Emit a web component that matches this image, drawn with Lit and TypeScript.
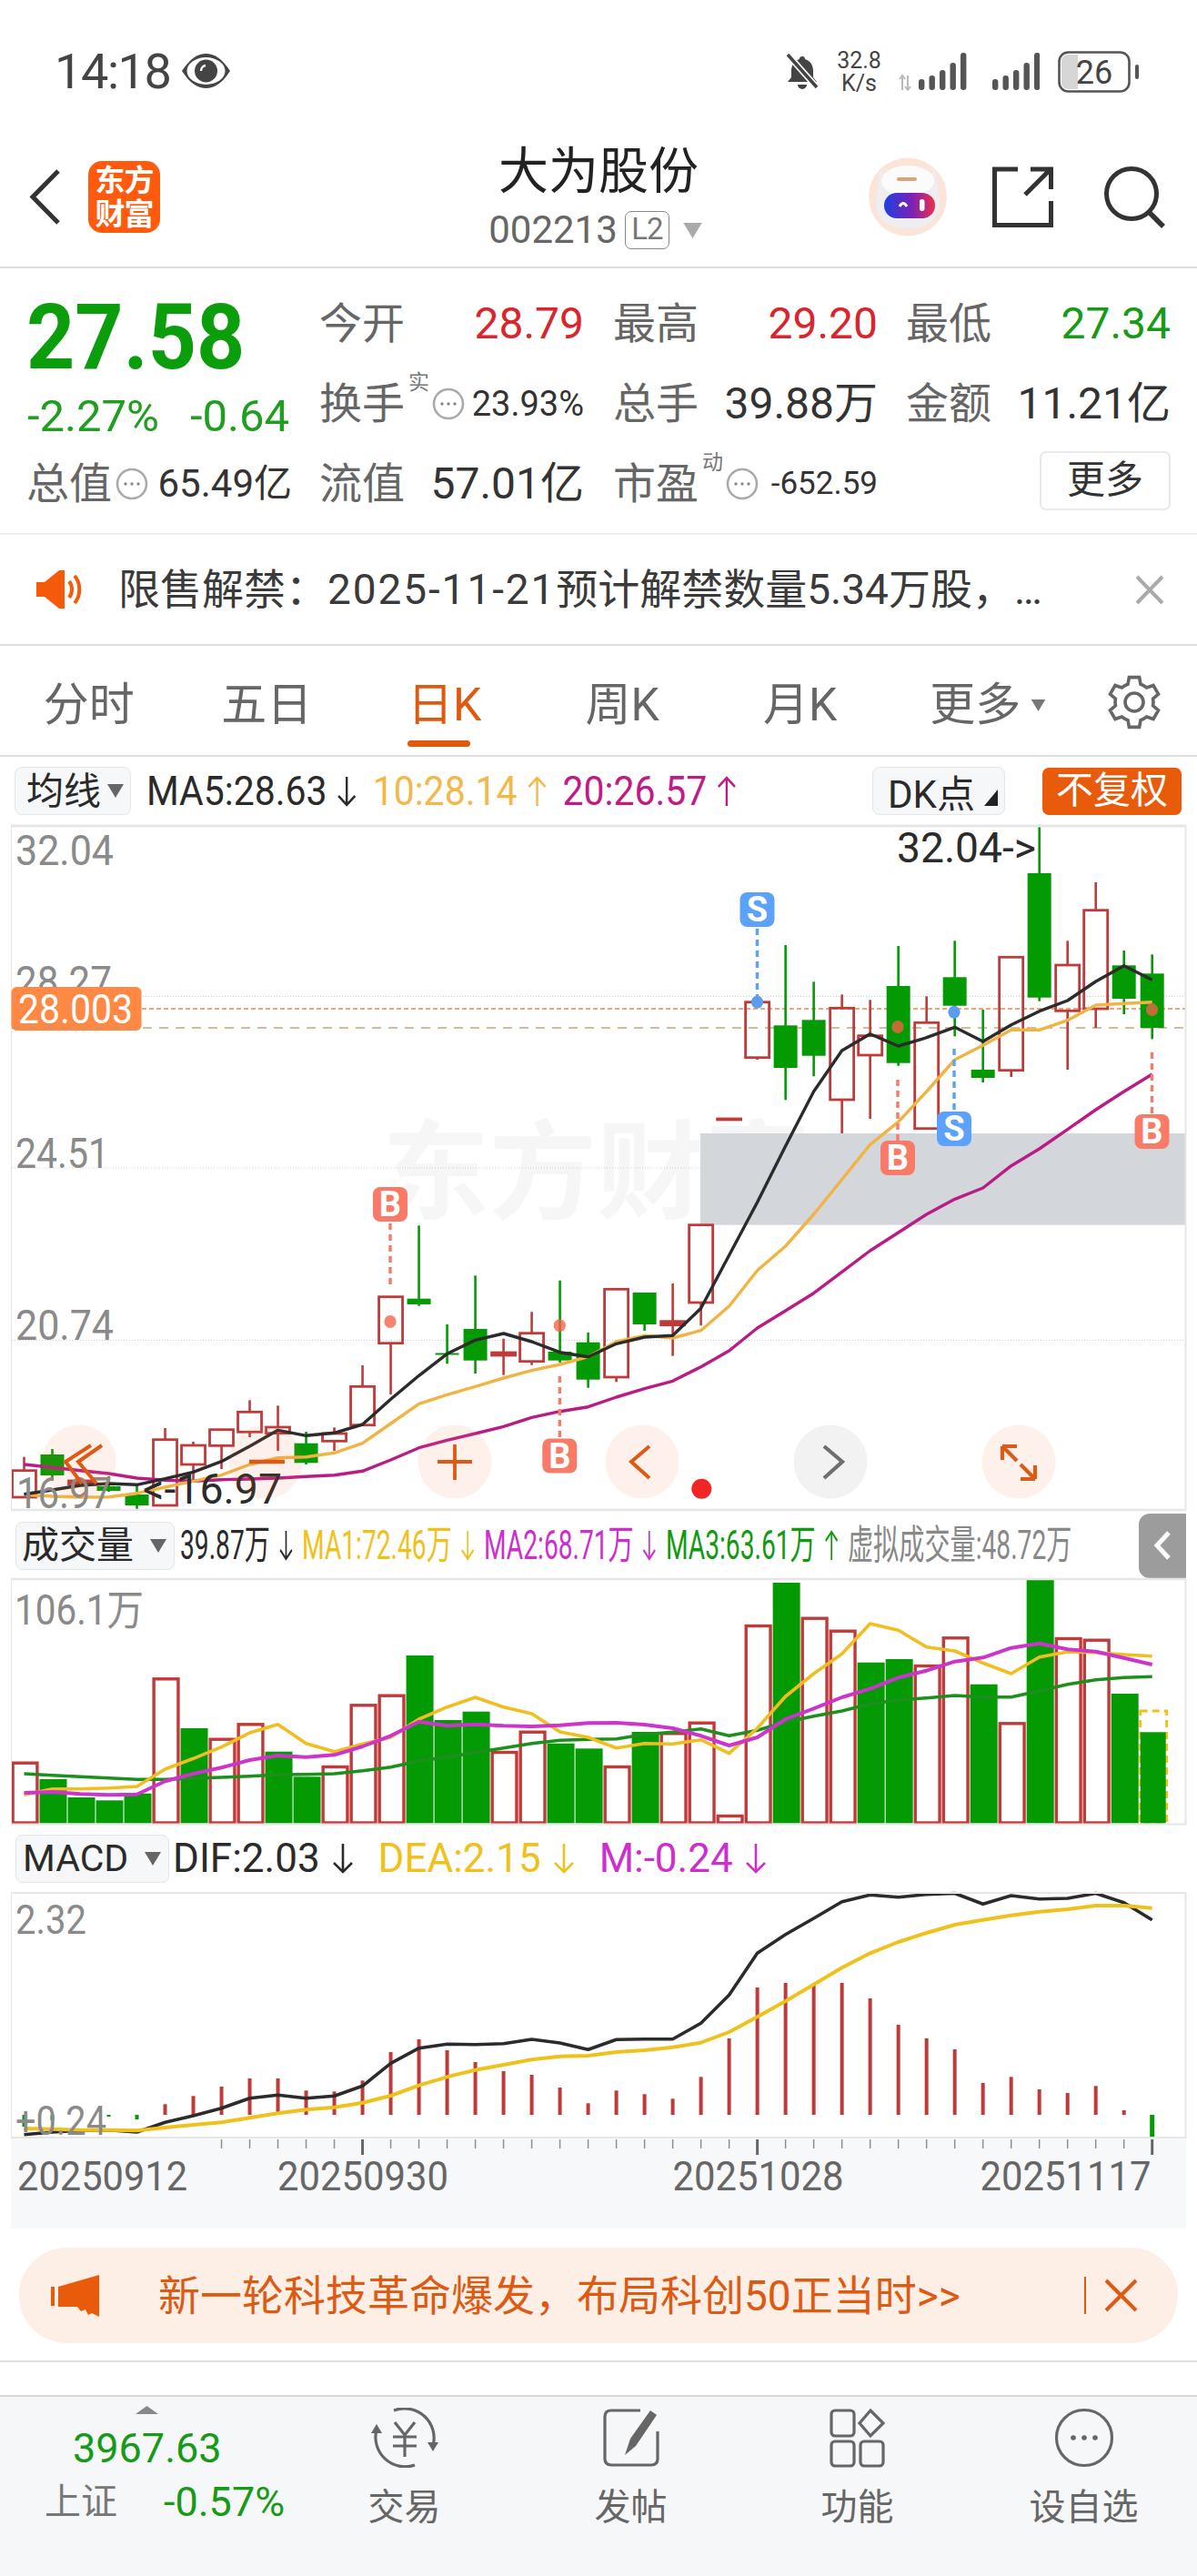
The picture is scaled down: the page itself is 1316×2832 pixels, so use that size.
import { LitElement, html, svg, css } from "lit";
import { customElement } from "lit/decorators.js";

const N = 41;
const X = (i: number) => 26.5 + 31.005 * i;

// type (r/g), wick top, body top, body bottom, wick bottom
type C = [string, number, number, number, number];
const candles: C[] = [
  ["r",1601.7,1616.7,1646,1646],["g",1593,1599,1622,1628],["r",1626,1628,1632,1634],["g",1623,1634,1639,1640],["g",1633,1643,1655,1660],
  ["r",1570,1582.7,1655,1655],["r",1585,1589,1610,1627],["r",1571,1571.7,1589.3,1615],["r",1539.3,1552.3,1574.3,1580],["r",1545.3,1569,1575.7,1595],
  ["g",1574,1586.7,1608.3,1610],["r",1569.3,1576,1584.3,1595],["r",1501,1524.3,1566.7,1566.7],["r",1425.7,1425.7,1476.7,1533],["g",1347.3,1427.7,1434,1435.7],
  ["g",1456,1487.5,1489.5,1499.3],["g",1402.3,1461,1495.7,1510],["r",1471.7,1487,1490,1511.7],["r",1442.3,1465.7,1496.7,1500.7],["g",1407.7,1486,1495.7,1498],
  ["g",1465,1475.7,1516.7,1525.7],["r",1417.3,1417.3,1514,1519.3],["g",1421,1421,1456,1463],["r",1411,1452.7,1456.7,1490.7],["r",1346.7,1346.7,1432,1457.3],
  ["r",1230,1230,1231,1231],["r",1101.7,1101.7,1162.7,1165],["g",1039,1127.3,1174,1209.3],["g",1079.3,1121.3,1160.7,1183.3],["r",1093.3,1108.3,1209,1246],
  ["r",1099.3,1138.7,1160,1230],["g",1040,1084,1168.7,1171.7],["r",1095.3,1124.3,1240.7,1240.7],["g",1034.3,1074.3,1105.7,1139.3],["g",1110,1176,1185,1190],
  ["r",1052.3,1052.3,1176.7,1184],["g",906.7,960,1096.7,1100.7],["r",1034.3,1061,1111.3,1176],["r",970,1000.7,1109,1130],["g",1045,1061.3,1098,1115],
  ["g",1049.3,1070.3,1130,1142.3],
];
const ma5 = [1642.7,1638,1633,1631,1632.3,1625.7,1618.3,1606.7,1590,1572.3,1578.3,1575.3,1566,1538.3,1512.3,1488.3,1473.3,1466,1475,1486.7,1491.7,1477.3,1470,1468.3,1438.3,1380,1321.7,1260,1200,1155,1136.7,1150,1140.7,1129.3,1145,1126.7,1111.7,1100,1079,1061.7,1077.3];
const ma10 = [1643.3,1645,1646,1645.7,1641.7,1635,1628.3,1621.7,1610,1602.7,1601.7,1597.3,1586.7,1565,1543.3,1533.3,1524.3,1515,1506.7,1500,1491.7,1475,1468.3,1471,1462.7,1436,1396.7,1370,1335,1296.7,1258.3,1233.3,1200,1165,1149.3,1132.3,1132.3,1121.7,1105,1103.3,1101.7];
const ma20 = [1610,1613.3,1616.7,1620,1625,1627.3,1628.3,1626.7,1626,1625,1623.3,1621.7,1617.3,1605,1591.7,1583.3,1576,1568.3,1558.3,1551.7,1546.7,1536,1526.7,1518.3,1502.7,1485,1460,1441,1421.7,1398.3,1375,1355,1335,1318.3,1306,1281.7,1263,1241.7,1220,1200,1181];

const vols: [string, number][] = [
  ["r",1936.7],["g",1956],["g",1976],["g",1979.3],["g",1971.7],["r",1844.3],["g",1900],["r",1910.7],["r",1894.3],["g",1925.7],
  ["g",1953.3],["r",1941],["r",1873.3],["r",1862.7],["g",1820],["g",1891],["g",1881.7],["r",1925],["r",1902.7],["g",1916.7],
  ["g",1922.3],["r",1941],["g",1904],["r",1904.3],["r",1892.7],["r",1995],["r",1786],["g",1740],["r",1777.7],["r",1791.7],
  ["g",1827.7],["g",1824],["r",1830],["r",1799.3],["g",1851.7],["r",1893.3],["g",1735.7],["r",1800],["r",1801.7],["g",1862],["g",1904.3],
];
const vma1 = [1973.3,1966.7,1966.7,1965.7,1964,1945,1933.3,1920.7,1905,1895.7,1916.7,1925.7,1917.3,1910,1890,1876.7,1866,1876.7,1884,1904,1910,1921.7,1916.7,1917.3,1912.7,1927.7,1900,1865,1840,1818.3,1785,1792.3,1810.7,1815,1828.3,1840,1821.7,1816,1816.7,1819,1820.7];
const vma2 = [1971,1970,1972.3,1973.3,1972.7,1958.3,1950,1943.3,1935,1930,1931.7,1929.3,1920,1908.3,1892.7,1897.3,1895.7,1897.3,1898,1896.7,1894.3,1894,1896,1900,1908.3,1919,1910,1890,1878.3,1866,1856.7,1844.3,1836.7,1826.7,1822.3,1811.7,1806.7,1813.3,1815.7,1822.7,1830];
const vma3 = [1950,1951.7,1953.3,1954.7,1956.3,1956.3,1955,1954,1952.7,1951,1950.7,1950,1946.7,1942.7,1936,1931.7,1926.7,1921.7,1916.7,1913.3,1912.3,1911.7,1906.7,1904.3,1900.7,1908.3,1902.3,1893.3,1886.7,1881,1873.3,1869,1866.7,1864,1865.7,1865.7,1859,1851.7,1846.7,1844.3,1843.3];

const macd = [2338,2331,2325,2327,2330,2313.3,2304.3,2294,2285,2285,2298.3,2299.3,2287.3,2256,2242,2254,2267,2277,2281,2295,2312.3,2298.3,2302.3,2307.3,2283.3,2241,2185,2180,2182.3,2180,2197,2226,2241,2253,2290,2283.3,2297,2301,2293.3,2320,2350.7];
const dif = [2346.7,2344,2342.3,2341.7,2344,2333.3,2326,2317.7,2306.7,2303.3,2306.7,2304.3,2293.3,2268.3,2251.7,2247.3,2247.7,2246.7,2242,2246,2253.3,2242.3,2241.7,2241.7,2224.3,2193.3,2147.3,2126.7,2109,2090.7,2083.3,2085.7,2082.7,2081.5,2093.3,2084,2087.7,2087,2081.5,2091.7,2110.7];
const dea = [2340,2340.7,2341.7,2341.7,2342.3,2339,2336,2333.3,2328.3,2323.3,2319.3,2316.7,2311.7,2304,2292.7,2283.3,2275.7,2270,2264.3,2260.7,2260,2256,2254,2250.7,2245.7,2234,2217.3,2200,2181.7,2163.3,2147.3,2135,2125,2116,2110.7,2105.7,2101.7,2099,2095,2095,2097.7];

const RED = "#c03a3a";
const GREEN = "#049a04";
const pts = (a: number[], dx = 0) => a.map((y, i) => `${(X(i) + dx).toFixed(1)},${y}`).join(" ");
const line = (a: number[], c: string, w = 3.4) =>
  svg`<polyline points=${pts(a)} fill="none" stroke=${c} stroke-width=${w} stroke-linejoin="round"></polyline>`;
const txt = (x: number, y: number, s: string, len: number, size: number, fill: string, weight = 400) =>
  svg`<text x=${x} y=${y} font-size=${size} fill=${fill} font-weight=${weight} textLength=${len} lengthAdjust="spacingAndGlyphs">${s}</text>`;

function candle(c: C, i: number) {
  const x = X(i);
  const [t, wt, bt, bb, wb] = c;
  const col = t === "r" ? RED : GREEN;
  const wick = svg`<line x1=${x} x2=${x} y1=${wt} y2=${wb} stroke=${col} stroke-width="2.6"></line>`;
  if (t === "g") {
    return svg`${wick}<rect x=${x - 13} y=${bt} width="26" height=${Math.max(bb - bt, 1.5)} fill=${col}></rect>`;
  }
  return svg`<line x1=${x} x2=${x} y1=${wt} y2=${bt} stroke=${col} stroke-width="2.6"></line>
    <line x1=${x} x2=${x} y1=${bb} y2=${wb} stroke=${col} stroke-width="2.6"></line>
    <rect x=${x - 13} y=${bt} width="26" height=${Math.max(bb - bt, 0.6)} fill=${bb - bt > 6 ? "#fff" : RED} fill-opacity=${bb - bt > 6 ? 0 : 1} stroke=${col} stroke-width="2.8"></rect>`;
}

function marker(kind: "B" | "S", x: number, top: number, dashA: number, dashB: number, dotY: number) {
  const col = kind === "B" ? "#f97a66" : "#5ca1fa";
  const dot = kind === "B" ? "rgba(246,98,70,.78)" : "#5b9cf0";
  return svg`
    <line x1=${x} x2=${x} y1=${dashA} y2=${dashB} stroke=${col} stroke-width="3.4" stroke-dasharray="7 5"></line>
    <ellipse cx=${x} cy=${dotY} rx="6.6" ry="7" fill=${dot}></ellipse>
    <rect x=${x - 19} y=${top} width="38" height="38" rx="8" fill=${col}></rect>
    <text x=${x} y=${top + 32} text-anchor="middle" font-size="38" font-weight="700" fill="#fff">${kind}</text>`;
}

function floatBtn(cx: number, grey: boolean, inner: unknown) {
  return svg`<ellipse cx=${cx} cy="1607" rx="40.5" ry="40.5" fill=${grey ? "rgba(225,225,225,.42)" : "rgba(248,120,60,.1)"}></ellipse>
    <g fill="none" stroke=${grey ? "#6e6e6e" : "#dc5a14"} stroke-width="3.6">${inner}</g>`;
}

function mainChart() {
  return svg`<svg class="chart" width="1316" height="754" viewBox="0 907 1316 754">
    <text x="420" y="1331" font-size="118" font-weight="700" fill="#f6f6f6">东方财富</text>
    <g stroke="#cfcfcf" stroke-width="1" stroke-dasharray="1 2">
      <line x1="13" x2="1303" y1="1095.5" y2="1095.5"></line>
      <line x1="13" x2="1303" y1="1284" y2="1284"></line>
      <line x1="13" x2="1303" y1="1473.5" y2="1473.5"></line>
    </g>
    <rect x="770" y="1246" width="533" height="100.7" fill="#d3d6db"></rect>
    <line x1="156" x2="1303" y1="1109" y2="1109" stroke="#e08a55" stroke-width="1.6" stroke-dasharray="5 3"></line>
    <line x1="13" x2="1303" y1="1130" y2="1130" stroke="#c9a67a" stroke-width="1.6" stroke-dasharray="10 8"></line>
    ${candles.map(candle)}
    ${line(ma20, "#b91c84")}${line(ma10, "#f0b445")}${line(ma5, "#2b2b2b")}
    <g fill="none" stroke="#e6e6e6"><line x1="12.5" x2="12.5" y1="907" y2="1661"></line><line x1="1303.5" x2="1303.5" y1="907" y2="1661" stroke-width="2"></line>
      <line x1="12" x2="1304" y1="908" y2="908" stroke-width="3"></line><line x1="12" x2="1304" y1="1660" y2="1660" stroke-width="2.5"></line></g>
    ${txt(17, 951, "32.04", 108, 46, "#8a8a8a")}
    ${txt(17, 1095, "28.27", 106, 46, "#8a8a8a")}
    ${txt(17, 1284, "24.51", 103, 46, "#8a8a8a")}
    ${txt(17, 1473, "20.74", 108, 46, "#8a8a8a")}
    <rect x="12.5" y="1085" width="143" height="48" rx="6" fill="#ff8844"></rect>
    <line x1="13" x2="155" y1="1130" y2="1130" stroke="#c9935f" stroke-width="1.4" stroke-dasharray="10 8"></line>
    ${txt(20, 1125, "28.003", 126, 45, "#fff")}
    ${txt(986, 948, "32.04->", 153, 46, "#2b2b2b")}
    ${txt(18, 1658, "16.97", 105, 48, "#8a8a8a")}
    ${txt(157, 1652.5, "<-16.97", 153, 46, "#2b2b2b")}
    ${marker("S", 832.5, 981, 1021, 1097, 1101.7)}
    ${marker("B", 987, 1254, 1187, 1254, 1129)}
    ${marker("S", 1049, 1222, 1153, 1221, 1112.7)}
    ${marker("B", 1266.5, 1225, 1157, 1224, 1110)}
    ${marker("B", 429, 1305, 1345, 1412, 1453)}
    ${marker("B", 615.3, 1581.5, 1513, 1581, 1457.3)}
    ${floatBtn(87, false, svg`<path d="M100 1589 L72 1607 L90 1631 M112 1589 L86 1607 L106 1631" stroke-width="4"></path>`)}
    ${floatBtn(292, false, svg`<path d="M274 1607 H313" stroke-width="4.5"></path>`)}
    ${floatBtn(500, false, svg`<path d="M481 1607 H519 M500 1588 V1627" stroke-width="3.8"></path>`)}
    ${floatBtn(706, false, svg`<path d="M714 1590 L694 1607 L714 1625" stroke-width="4"></path>`)}
    ${floatBtn(913, true, svg`<path d="M906 1590 L926 1607 L906 1625" stroke-width="4.2"></path>`)}
    ${floatBtn(1120, false, svg`<path d="M1102 1590 H1118 M1102 1590 V1605 M1102 1590 L1118 1606 M1138 1626 H1122 M1138 1626 V1611 M1138 1626 L1122 1610" stroke-width="4.2"></path>`)}
    <ellipse cx="771.3" cy="1636.7" rx="11" ry="11" fill="#f22525"></ellipse>
  </svg>`;
}

function volChart() {
  return svg`<svg class="chart" width="1316" height="271" viewBox="0 1735 1316 271">
    ${vols.map(([t, y], i) => {
      const x = X(i) + 1;
      if (i === 40) {
        return svg`<rect x=${x - 14} y="1881" width="29" height="123" fill="none" stroke="#efc11c" stroke-width="3" stroke-dasharray="8 5"></rect>
          <rect x=${x - 14} y=${y} width="28" height=${2004.5 - y} fill=${GREEN}></rect>`;
      }
      return t === "g"
        ? svg`<rect x=${x - 15} y=${y} width="30" height=${2004.5 - y} fill=${GREEN}></rect>`
        : svg`<rect x=${x - 13.4} y=${y + 1.5} width="26.8" height=${2002.5 - y} fill="none" stroke=${RED} stroke-width="3.4"></rect>`;
    })}
    ${line(vma3, "#1c8f1c", 3.6)}${line(vma1, "#f0be1e", 3.6)}${line(vma2, "#cc35cc", 4)}
    <g stroke="#e6e6e6"><line x1="12.5" x2="12.5" y1="1735" y2="2006"></line><line x1="1303.5" x2="1303.5" y1="1735" y2="2006" stroke-width="2"></line>
      <line x1="12" x2="1304" y1="1736" y2="1736" stroke-width="2.5"></line><line x1="12" x2="1304" y1="2005.5" y2="2005.5" stroke-width="2"></line></g>
    ${txt(16, 1786, "106.1万", 142, 46, "#8a8a8a")}
  </svg>`;
}

function macdChart() {
  return svg`<svg class="chart" width="1316" height="271" viewBox="0 2080 1316 271">
    ${macd.map((y, i) => {
      const x = X(i);
      const pos = y < 2325;
      if (i < 5) {
        return i === 2 ? null : svg`<rect x=${x - 2} y=${2325} width="4" height=${y - 2325} fill=${GREEN}></rect>`;
      }
      return pos
        ? svg`<rect x=${x - 2} y=${y} width="4" height=${2325 - y} fill=${RED}></rect>`
        : svg`<rect x=${x - 2.5} y="2325" width="5" height=${y - 2325} fill=${GREEN}></rect>`;
    })}
    ${line(dif, "#2b2b2b", 3.6)}${line(dea, "#efc11c", 4)}
    <g stroke="#e6e6e6"><line x1="12.5" x2="12.5" y1="2080" y2="2351"></line><line x1="1303.5" x2="1303.5" y1="2080" y2="2351" stroke-width="2"></line>
      <line x1="12" x2="1304" y1="2081" y2="2081" stroke-width="2"></line><line x1="12" x2="1304" y1="2350" y2="2350" stroke-width="2"></line></g>
    ${txt(17, 2126, "2.32", 78, 44, "#8a8a8a")}
    ${txt(17, 2346.5, "+0.24", 100, 44, "#8a8a8a")}
  </svg>`;
}

function axis() {
  return svg`<svg class="chart" width="1316" height="99" viewBox="0 2351 1316 99">
    <rect x="12" y="2351" width="1292" height="99" fill="#f7f8fa"></rect>
    ${Array.from({ length: N }, (_, i) => i).filter((i) => i >= 7).map((i) => {
      const big = i === 12 || i === 26 || i === 40;
      const x = X(i);
      return svg`<line x1=${x} x2=${x} y1="2352" y2=${big ? 2369 : 2362} stroke=${big ? "#666" : "#8f8f8f"} stroke-width=${big ? 3 : 1.5}></line>`;
    })}
    ${txt(19, 2408, "20250912", 187, 44, "#666")}
    ${txt(305, 2408, "20250930", 188, 44, "#666")}
    ${txt(739.5, 2408, "20251028", 188, 44, "#666")}
    ${txt(1077.5, 2408, "20251117", 188, 44, "#666")}
  </svg>`;
}

const tri = html`<svg class="tri" width="18" height="15" viewBox="0 0 18 15"><path d="M0 0H18L9 15Z"></path></svg>`;
const down = html`<svg class="arw" width="24" height="34" viewBox="0 0 24 34"><path d="M12 1V32M2 22L12 32L22 22"></path></svg>`;
const up = html`<svg class="arw" width="24" height="34" viewBox="0 0 24 34"><path d="M12 33V2M2 12L12 2L22 12"></path></svg>`;
const more = html`<svg class="moreic" width="36" height="36" viewBox="0 0 36 36"><circle cx="18" cy="18" r="16"></circle><circle class="d" cx="11" cy="18" r="1.7"></circle><circle class="d" cx="18" cy="18" r="1.7"></circle><circle class="d" cx="25" cy="18" r="1.7"></circle></svg>`;

function gearPath() {
  const cx = 30, cy = 30, n = 6;
  const out: string[] = [];
  for (let i = 0; i < n; i++) {
    const a = (i * 2 * Math.PI) / n - Math.PI / 2;
    const s = Math.PI / n;
    const p = (r: number, d: number) => `${(cx + r * Math.cos(a + d)).toFixed(1)} ${(cy + r * Math.sin(a + d)).toFixed(1)}`;
    out.push(`${i ? "L" : "M"}${p(28, -0.2)} L${p(28, 0.2)} L${p(21, 0.34)} L${p(21, s + 0.0)} L${p(21, s + s - 0.34)}`);
  }
  return out.join(" ") + "Z";
}

const sigBars = (x0: number) => [12, 16, 22, 30, 41].map((h, i) =>
  svg`<rect x=${x0 + i * 11.5} y=${41 - h} width="6.4" height=${h} rx="3" fill="#555"></rect>`);

@customElement("app-root")
export class AppRoot extends LitElement {
  static styles = css`
    :host { display: block; width: 1316px; height: 2832px; background: #fff; overflow: hidden;
      font-family: Roboto, "Noto Sans CJK SC", sans-serif; color: #333; }
    * { box-sizing: border-box; }
    .chart { display: block; overflow: visible; }
    .status { height: 140px; padding: 55px 63px 0 60px; display: flex; align-items: flex-start; }
    .time { font-size: 54px; line-height: 48px; width: 125px; color: #444; letter-spacing: -1.4px; white-space: nowrap; }
    .eye { margin: 4px 0 0 14px; }
    .stright { margin-left: auto; display: flex; align-items: center; height: 48px; }
    .speed { margin: 0 17px; width: 53px; font-size: 25px; line-height: 25px; text-align: center; color: #444; }
    .sig2 { margin-left: 27px; margin-right: 20px; }

    .head { height: 155px; border-bottom: 2px solid #dedede; display: grid; grid-template-columns: 1fr auto 1fr; align-items: start; }
    .hl { display: flex; align-items: center; padding: 37px 0 0 32px; gap: 30px; }
    .logo { width: 79px; height: 79px; border-radius: 15px; background: #ff5a0d; color: #fff; font-size: 33px; line-height: 37px; font-weight: 700; display: flex; flex-direction: column; align-items: center; justify-content: center; letter-spacing: -1px; }
    .hc { display: flex; flex-direction: column; align-items: center; padding-top: 18px; }
    .title { font-size: 55px; line-height: 60px; color: #222; }
    .code { margin-top: 14px; display: flex; align-items: center; font-size: 42px; line-height: 42px; color: #666; margin-left: -4px; }
    .l2 { margin-left: 8px; width: 49px; height: 42px; border: 1.5px solid #888; border-radius: 7px; font-size: 33px; line-height: 38px; text-align: center; color: #777; letter-spacing: -1px; }
    .code .tri { width: 27px; height: 17px; margin-left: 12px; fill: #aaa; }
    .hr { display: flex; justify-content: flex-end; align-items: center; padding: 33px 34px 0 0; }
    .share { margin: 0 55px 0 50px; }

    .quote { height: 293px; border-bottom: 2px solid #eee; padding: 17px 0 0 32px; display: grid; grid-template-columns: 319px 323px 322px 292px; grid-template-rows: 88px 88px 88px; }
    .left { grid-row: 1 / span 2; }
    .big { font-size: 100px; font-weight: 700; line-height: 118px; margin-left: -3px; color: #0b9d0b; transform: scaleX(.93); transform-origin: left center; }
    .chg { display: flex; gap: 34px; margin-left: -2px; font-size: 49px; line-height: 56px; color: #1f9e1f; }
    .cell { width: 291px; display: flex; align-items: center; }
    .c0 { width: 292px; gap: 4px; margin-left: -3px; }
    .lb { font-size: 47px; line-height: 50px; color: #666; white-space: nowrap; }
    .v { margin-left: auto; font-size: 48px; line-height: 50px; white-space: nowrap; color: #333; }
    .red { color: #d8262e; }
    .grn { color: #179a17; }
    .v38 { font-size: 38px; }
    .v41 { font-size: 42px; }
    .v35 { font-size: 35px; }
    .sup { align-self: flex-start; margin: 9px 3px 0 4px; font-size: 23px; line-height: 23px; color: #777; }
    .moreic { flex: none; fill: none; stroke: #aaa; stroke-width: 2.6; }
    .moreic .d { fill: #888; stroke: none; }
    .btn { margin-left: auto; align-self: flex-start; margin-top: 8px; width: 144px; height: 65px; border: 2px solid #e9e9e9; border-radius: 7px; font-size: 42px; line-height: 60px; text-align: center; color: #333; }

    .notice { height: 122px; border-bottom: 2px solid #dedede; display: flex; align-items: center; padding: 0 36px 0 40px; }
    .ntxt { margin-left: 39px; font-size: 46px; line-height: 50px; color: #3a3a3a; white-space: nowrap; }
    .date { letter-spacing: 1.9px; }
    .nx { margin-left: auto; }

    .tabs { height: 122px; border-bottom: 2px solid #dedede; display: flex; }
    .tab { width: 195.5px; display: flex; justify-content: center; font-size: 50px; line-height: 50px; color: #666; padding-top: 40px; }
    .tabin { display: flex; flex-direction: column; align-items: flex-start; gap: 14px; }
    .on { color: #e0590c; }
    .ul { width: 69px; height: 7px; border-radius: 4px; background: #e0590c; }
    .trow { display: flex; align-items: center; gap: 11px; height: 50px; margin-left: 22px; }
    .trow .tri { fill: #777; width: 17px; height: 13px; }
    .gear { margin: 32px 0 0 44px; fill: none; stroke: #666; stroke-width: 3.6; }

    .bar { height: 75px; display: flex; align-items: center; padding: 0 17px 0 16px; white-space: nowrap; }
    .sel { height: 53px; flex: none; border: 1.5px solid #e3e5e8; border-radius: 8px; background: #f6f7f9; display: flex; align-items: center; font-size: 41px; line-height: 50px; color: #2a2a2a; padding-left: 12px; }
    .sel .tri { fill: #666; margin-left: 7px; }
    .s1 { width: 128px; }
    .s2 { width: 175px; padding-left: 6px; }
    .s2 .tri { margin-left: 18px; }
    .s3 { width: 169px; padding-left: 7px; }
    .s3 .tri { margin-left: 18px; }
    .arw { flex: none; fill: none; stroke: currentColor; stroke-width: 2.6; }
    .ma { margin-left: 17px; width: 660px; flex: none; }
    .mai { width: 730px; display: flex; align-items: center; gap: 19px; font-size: 45px; line-height: 50px; transform: scaleX(.91); transform-origin: left center; }
    .it { display: flex; align-items: center; gap: 12px; flex: none; }
    .k { color: #2a2a2a; }
    .o { color: #f3b84a; }
    .m { color: #c01a88; }
    .dk { margin-left: auto; width: 146px; height: 53px; flex: none; border: 1.5px solid #e3e5e8; border-radius: 8px; background: #f6f7f9; display: flex; align-items: center; padding-left: 16px; font-size: 42px; color: #2a2a2a; }
    .dk svg { margin: 14px 0 0 10px; }
    .fq { margin-left: 41px; width: 153px; height: 52px; flex: none; background: #e85b0b; color: #fff; border-radius: 7px; font-size: 41px; line-height: 50px; text-align: center; }

    .vbar { height: 74px; align-items: center; padding: 2px 12px 0 17px; }
    .vg { margin-left: 6px; flex: none; width: 977px; }
    .vi { width: 1520px; display: flex; align-items: center; gap: 13px; font-size: 44px; line-height: 50px; transform: scaleX(.64); transform-origin: left center; }
    .vi .arw { width: 30px; }
    .g1 { color: #efc11c; }
    .g2 { color: #cc2fcc; }
    .g3 { color: #0f9a0f; }
    .gy { color: #888; }
    .gtab { margin-left: auto; width: 52px; height: 71px; border-radius: 12px 0 0 12px; background: #9c9c9c; display: flex; align-items: center; justify-content: center; flex: none; }

    .mbar { height: 74px; padding: 0 0 0 17px; align-items: center; }
    .mrow { margin-left: 4px; display: flex; align-items: center; gap: 27px; font-size: 44px; line-height: 50px; }
    .mrow .it { gap: 13px; }

    .ad { height: 147px; border-bottom: 2px solid #dedede; padding: 21px 21px 0; }
    .adin { height: 105px; border-radius: 52px; background: #fdeee6; display: flex; align-items: center; padding-left: 35px; color: #dc5a12; }
    .adt { margin-left: 65px; font-size: 46px; line-height: 50px; white-space: nowrap; width: 1018px; flex: none; }
    .div { width: 1.5px; height: 41px; background: #dc5a12; }
    .adx { margin-left: 20px; }
    .gap { height: 36px; }

    .nav { height: 199px; border-top: 2px solid #d8d8d8; background: #f6f7f9; display: flex; padding-left: 49px; }
    .idx { width: 271px; display: flex; flex-direction: column; }
    .idxtri { margin: 10px 0 0 100px; fill: #888; }
    .idxn { margin: 14px 0 0 31px; font-size: 45px; line-height: 48px; color: #179a17; }
    .idxr { margin-top: 13px; display: flex; align-items: center; gap: 51px; }
    .idxl { font-size: 40px; line-height: 44px; color: #777; }
    .idxp { font-size: 45px; line-height: 44px; color: #179a17; }
    .nit { width: 249px; display: flex; flex-direction: column; align-items: center; padding-top: 12px; }
    .nit svg { display: block; height: 66px; fill: none; stroke: #666; stroke-width: 3.2; }
    .nit span { margin-top: 24px; font-size: 40px; line-height: 40px; color: #666; white-space: nowrap; }
  `;

  render() {
    return html`
      <div class="status">
        <div class="time">14:18</div>
        <svg class="eye" width="55" height="38" viewBox="0 0 55 38">
          <path d="M1 19C10 5 19 0 27.5 0S45 5 54 19C45 33 36 38 27.5 38S10 33 1 19Z" fill="#444"></path>
          <ellipse cx="27.5" cy="19" rx="21" ry="15" fill="#fff"></ellipse>
          <circle cx="27.5" cy="19" r="12.5" fill="#444"></circle>
          <path d="M22 19a6 6 0 0 1 5-6" stroke="#fff" stroke-width="2.4" fill="none"></path>
        </svg>
        <div class="stright">
          <svg width="38" height="40" viewBox="0 0 38 40">
            <path d="M19 3a3 3 0 0 1 3 3c7 2 9 8 9 13v7l4 5H3l4-5v-7c0-5 2-11 9-13a3 3 0 0 1 3-3Z" fill="#444"></path>
            <path d="M14 34h10a5 5 0 0 1-10 0Z" fill="#444"></path>
            <path d="M3 1L35 37" stroke="#fff" stroke-width="7"></path>
            <path d="M3 1L35 37" stroke="#444" stroke-width="3.6"></path>
          </svg>
          <div class="speed">32.8<br />K/s</div>
          <svg width="76" height="42" viewBox="0 0 76 42">
            <path d="M4 41V25M1 29l3-4 3 4M10 25V41M7 37l3 4 3-4" stroke="#bbb" stroke-width="2" fill="none"></path>
            ${sigBars(22)}
          </svg>
          <svg class="sig2" width="52" height="42" viewBox="0 0 52 42">${sigBars(0)}</svg>
          <svg width="90" height="46" viewBox="0 0 90 46">
            <rect x="1.5" y="1.5" width="77" height="43" rx="10" fill="none" stroke="#555" stroke-width="2.6"></rect>
            <path d="M4 11a7 7 0 0 1 7-7h11v38H11a7 7 0 0 1-7-7Z" fill="#d6d6d6"></path>
            <text x="40" y="36" text-anchor="middle" font-size="36" fill="#444">26</text>
            <rect x="85" y="15" width="4" height="16" rx="2" fill="#555"></rect>
          </svg>
        </div>
      </div>

      <div class="head">
        <div class="hl">
          <svg width="35" height="61" viewBox="0 0 35 61"><path d="M32 2L4 30.5L32 59" fill="none" stroke="#333" stroke-width="5"></path></svg>
          <div class="logo"><div>东方</div><div>财富</div></div>
        </div>
        <div class="hc">
          <div class="title">大为股份</div>
          <div class="code">002213<div class="l2">L2</div>${tri}</div>
        </div>
        <div class="hr">
          <svg width="86" height="87" viewBox="0 0 86 87">
            <defs><linearGradient id="vis" x1="0" x2="1"><stop offset="0" stop-color="#1f3fe0"></stop><stop offset=".55" stop-color="#7a22b8"></stop><stop offset="1" stop-color="#ee3048"></stop></linearGradient></defs>
            <circle cx="43" cy="43.5" r="43" fill="#fbe4d8"></circle>
            <path d="M13 12L22 26H64L73 12L78 50C78 70 62 78 43 78S8 70 8 50Z" fill="#eeedf1"></path>
            <ellipse cx="43" cy="26" rx="29" ry="17" fill="#fbfbfc"></ellipse>
            <rect x="31" y="22" width="22" height="4" rx="2" fill="#d9a47a"></rect>
            <rect x="17" y="39" width="56" height="28" rx="14" fill="url(#vis)"></rect>
            <path d="M34 54q4-7 8 0" stroke="#fff" stroke-width="2.8" fill="none"></path>
            <rect x="56" y="46" width="5.5" height="13" rx="2.7" fill="#fff"></rect>
          </svg>
          <svg class="share" width="67" height="67" viewBox="0 0 67 67"><path d="M28 3H2.5V64.5H64.5V38M36 31L63 4M42 3H64.5V25" fill="none" stroke="#333" stroke-width="5"></path></svg>
          <svg width="69" height="68" viewBox="0 0 69 68"><circle cx="31" cy="30" r="27.5" fill="none" stroke="#333" stroke-width="5"></circle><path d="M50 50L66 66" stroke="#333" stroke-width="5.5"></path></svg>
        </div>
      </div>

      <div class="quote">
        <div class="left">
          <div class="big">27.58</div>
          <div class="chg"><span>-2.27%</span><span>-0.64</span></div>
        </div>
        <div class="cell"><span class="lb">今开</span><span class="v red">28.79</span></div>
        <div class="cell"><span class="lb">最高</span><span class="v red">29.20</span></div>
        <div class="cell"><span class="lb">最低</span><span class="v grn">27.34</span></div>
        <div class="cell"><span class="lb">换手</span><span class="sup">实</span>${more}<span class="v v38">23.93%</span></div>
        <div class="cell"><span class="lb">总手</span><span class="v">39.88万</span></div>
        <div class="cell"><span class="lb">金额</span><span class="v">11.21亿</span></div>
        <div class="cell c0"><span class="lb">总值</span>${more}<span class="v v41">65.49亿</span></div>
        <div class="cell"><span class="lb">流值</span><span class="v">57.01亿</span></div>
        <div class="cell"><span class="lb">市盈</span><span class="sup">动</span>${more}<span class="v v35">-652.59</span></div>
        <div class="cell"><div class="btn">更多</div></div>
      </div>

      <div class="notice">
        <svg width="51" height="42" viewBox="0 0 51 42" fill="#f55a0a">
          <path d="M0 13H9L25 0H31V42H25L9 29H0Z"></path>
          <path d="M36 12C40 17 40 25 36 30M42 6C49 14 49 28 42 36" fill="none" stroke="#f55a0a" stroke-width="4"></path>
        </svg>
        <div class="ntxt">限售解禁：<span class="date">2025-11-21</span>预计解禁数量5.34万股，…</div>
        <svg class="nx" width="32" height="33" viewBox="0 0 32 33"><path d="M2 2L30 31M30 2L2 31" stroke="#aaa" stroke-width="4"></path></svg>
      </div>

      <div class="tabs">
        <div class="tab">分时</div>
        <div class="tab">五日</div>
        <div class="tab on"><div class="tabin"><div>日K</div><div class="ul"></div></div></div>
        <div class="tab">周K</div>
        <div class="tab">月K</div>
        <div class="tab"><div class="trow">更多${tri}</div></div>
        <svg class="gear" width="60" height="60" viewBox="0 0 60 60"><path d=${gearPath()}></path><circle cx="30" cy="30" r="10"></circle></svg>
      </div>

      <div class="bar">
        <div class="sel s1">均线${tri}</div>
        <div class="ma"><div class="mai">
          <div class="it k">MA5:28.63${down}</div>
          <div class="it o">10:28.14${up}</div>
          <div class="it m">20:26.57${up}</div>
        </div></div>
        <div class="dk">DK点<svg width="15" height="18" viewBox="0 0 15 18"><path d="M15 0V18H0Z" fill="#222"></path></svg></div>
        <div class="fq">不复权</div>
      </div>
      ${mainChart()}

      <div class="bar vbar">
        <div class="sel s2">成交量${tri}</div>
        <div class="vg"><div class="vi">
          <div class="it k">39.87万${down}</div>
          <div class="it g1">MA1:72.46万${down}</div>
          <div class="it g2">MA2:68.71万${down}</div>
          <div class="it g3">MA3:63.61万${up}</div>
          <div class="it gy">虚拟成交量:48.72万</div>
        </div></div>
        <div class="gtab"><svg width="20" height="34" viewBox="0 0 20 34"><path d="M17 3L4 17L17 31" fill="none" stroke="#fff" stroke-width="5"></path></svg></div>
      </div>
      ${volChart()}

      <div class="bar mbar">
        <div class="sel s3">MACD${tri}</div>
        <div class="mrow">
          <div class="it k">DIF:2.03${down}</div>
          <div class="it g1">DEA:2.15${down}</div>
          <div class="it g2">M:-0.24${down}</div>
        </div>
      </div>
      ${macdChart()}
      ${axis()}

      <div class="ad">
        <div class="adin">
          <svg width="53" height="46" viewBox="0 0 53 46" fill="#e85b0b">
            <rect x="0" y="13" width="4" height="21"></rect>
            <path d="M8 13L53 0V46L45 42L41 44L38 38L33 40L29 35H8Z"></path>
          </svg>
          <div class="adt">新一轮科技革命爆发，布局科创50正当时>></div>
          <div class="div"></div>
          <svg class="adx" width="37" height="37" viewBox="0 0 37 37"><path d="M2 2L35 35M35 2L2 35" stroke="#dc5a12" stroke-width="4"></path></svg>
        </div>
      </div>
      <div class="gap"></div>

      <div class="nav">
        <div class="idx">
          <svg class="idxtri" width="25" height="9" viewBox="0 0 25 9"><path d="M12.5 0L25 9H0Z"></path></svg>
          <div class="idxn">3967.63</div>
          <div class="idxr"><span class="idxl">上证</span><span class="idxp">-0.57%</span></div>
        </div>
        <div class="nit">
          <svg width="78" viewBox="0 0 78 66">
            <path d="M27 3A32.5 32.5 0 0 1 70 42M50 63A32.5 32.5 0 0 1 8 24"></path>
            <path d="M76 38H64L70 48ZM2 28H14L8 18Z" fill="#666" stroke="none"></path>
            <path d="M28 16L39 30L50 16M26 32H52M26 42H52M39 30V54"></path>
          </svg>
          <span>交易</span>
        </div>
        <div class="nit">
          <svg width="64" viewBox="0 0 64 66">
            <path d="M42 3H10Q3 3 3 10V56Q3 63 10 63H54Q61 63 61 56V26"></path>
            <path d="M25 52L31 34L53 3L60 8L37 42Z" fill="#666" stroke="none"></path>
          </svg>
          <span>发帖</span>
        </div>
        <div class="nit">
          <svg width="62" viewBox="0 0 62 66">
            <rect x="2" y="3" width="25" height="28" rx="4"></rect>
            <path d="M45 3L59 17L45 31L33 17Z"></path>
            <rect x="2" y="37" width="25" height="27" rx="4"></rect>
            <rect x="34" y="37" width="25" height="27" rx="4"></rect>
          </svg>
          <span>功能</span>
        </div>
        <div class="nit">
          <svg width="66" viewBox="0 0 66 66">
            <circle cx="33" cy="33" r="30.5"></circle>
            <circle cx="21" cy="33" r="2.8" fill="#666" stroke="none"></circle>
            <circle cx="33" cy="33" r="2.8" fill="#666" stroke="none"></circle>
            <circle cx="45" cy="33" r="2.8" fill="#666" stroke="none"></circle>
          </svg>
          <span>设自选</span>
        </div>
      </div>
    `;
  }
}
